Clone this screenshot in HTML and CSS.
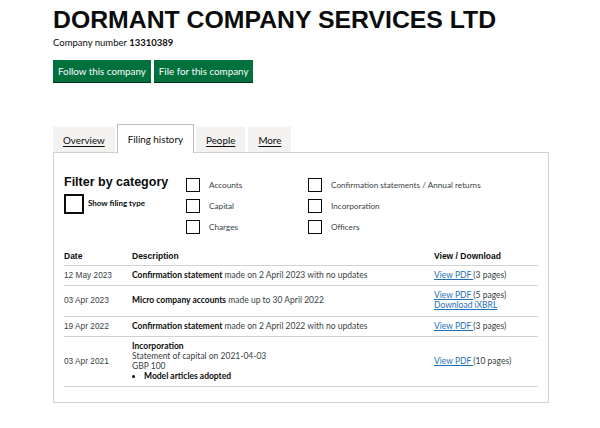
FILE: index.html
```html
<!DOCTYPE html>
<html lang="en">
<head>
<meta charset="utf-8">
<title>DORMANT COMPANY SERVICES LTD - Filing history</title>
<link rel="stylesheet" href="styles.css">
</head>
<body>
<div class="page">
  <h1 class="title">DORMANT COMPANY SERVICES LTD</h1>
  <p class="company-number">Company number <strong>13310389</strong></p>
  <div class="actions">
    <a class="btn" href="#">Follow this company</a>
    <a class="btn" href="#">File for this company</a>
  </div>

  <nav class="tabs">
    <a class="tab" href="#">Overview</a>
    <span class="tab tab-active">Filing history</span>
    <a class="tab" href="#">People</a>
    <a class="tab tab-more" href="#">More</a>
  </nav>

  <section class="panel">
    <div class="filters">
      <div class="filter-head">
        <h2 class="filter-title">Filter by category</h2>
        <label class="show-type"><span class="box-lg"></span><span class="show-type-text">Show filing type</span></label>
      </div>
      <div class="categories">
        <label class="cat"><span class="box"></span><span>Accounts</span></label>
        <label class="cat"><span class="box"></span><span>Capital</span></label>
        <label class="cat"><span class="box"></span><span>Charges</span></label>
        <label class="cat"><span class="box"></span><span>Confirmation statements / Annual returns</span></label>
        <label class="cat"><span class="box"></span><span>Incorporation</span></label>
        <label class="cat"><span class="box"></span><span>Officers</span></label>
      </div>
    </div>

    <table class="filings">
      <thead>
        <tr><th class="col-date">Date</th><th class="col-desc">Description</th><th class="col-view">View / Download</th></tr>
      </thead>
      <tbody>
        <tr>
          <td class="date">12 May 2023</td>
          <td class="desc"><strong>Confirmation statement</strong> made on 2 April 2023 with no updates</td>
          <td class="view"><a href="#">View PDF </a>(3 pages)</td>
        </tr>
        <tr>
          <td class="date">03 Apr 2023</td>
          <td class="desc"><strong>Micro company accounts</strong> made up to 30 April 2022</td>
          <td class="view"><a href="#">View PDF </a>(5 pages)<br><a href="#">Download iXBRL</a></td>
        </tr>
        <tr>
          <td class="date">19 Apr 2022</td>
          <td class="desc"><strong>Confirmation statement</strong> made on 2 April 2022 with no updates</td>
          <td class="view"><a href="#">View PDF </a>(3 pages)</td>
        </tr>
        <tr>
          <td class="date">03 Apr 2021</td>
          <td class="desc"><strong>Incorporation</strong><br>Statement of capital on 2021-04-03<br>GBP 100
            <ul class="bullets"><li>Model articles adopted</li></ul>
          </td>
          <td class="view"><a href="#">View PDF </a>(10 pages)</td>
        </tr>
      </tbody>
    </table>
  </section>
</div>
</body>
</html>
```

FILE: styles.css
```css
* { box-sizing: border-box; }

body {
  margin: 0;
  background: #ffffff;
  color: #0b0c0c;
  font-family: Lato, "Liberation Sans", Arial, sans-serif;
}

.page {
  padding: 6px 0 0 53px;
  width: 549px;
}

.title {
  margin: 0;
  font-family: "Liberation Sans", Arial, sans-serif;
  font-weight: 700;
  font-size: 24.8px;
  line-height: 28px;
  white-space: nowrap;
}

.company-number {
  margin: 3px 0 0;
  font-size: 9.5px;
  line-height: 12px;
  color: #0b0c0c;
}

.company-number strong { font-weight: 700; }

.actions {
  display: flex;
  gap: 3px;
  margin-top: 11px;
}

.btn {
  display: flex;
  align-items: center;
  height: 22px;
  padding: 0 5px;
  background: #00703c;
  color: #ffffff;
  text-decoration: none;
  font-size: 9.8px;
  box-shadow: 0 1px 0 #002d18;
}

.tabs {
  display: flex;
  align-items: flex-end;
  gap: 2px;
  margin-top: 42px;
  position: relative;
  z-index: 1;
}

.tab {
  display: flex;
  align-items: center;
  height: 25px;
  padding: 0 10px;
  background: #f3f2f1;
  color: #0b0c0c;
  font-size: 9.8px;
  text-decoration: underline;
  text-underline-offset: 2px;
}

.tab-more { margin-left: 1px; }

.tab-active {
  height: 29px;
  margin-bottom: -1px;
  padding: 0 10px 1px;
  background: #ffffff;
  border: 1px solid #b9bcbe;
  border-bottom: 0;
  text-decoration: none;
}

.panel {
  width: 496px;
  border: 1px solid #cfd1d2;
  padding: 22px 10px 15px 10px;
}

.filters {
  display: flex;
}

.filter-head {
  width: 122px;
  flex: none;
}

.filter-title {
  margin: 0;
  font-family: "Liberation Sans", Arial, sans-serif;
  font-weight: 700;
  font-size: 12.5px;
  line-height: 15px;
}

.show-type {
  display: flex;
  align-items: flex-start;
  gap: 4px;
  margin-top: 4px;
}

.box-lg {
  width: 20px;
  height: 20px;
  border: 2px solid #0b0c0c;
  flex: none;
}

.show-type-text {
  font-size: 8px;
  font-weight: 700;
  line-height: 10px;
  padding-top: 4px;
}

.categories {
  display: grid;
  grid-template-rows: repeat(3, 14px);
  grid-auto-flow: column;
  grid-template-columns: 122px auto;
  row-gap: 7px;
  margin-top: 3px;
}

.cat {
  display: flex;
  align-items: center;
  gap: 9px;
  font-size: 8.2px;
  color: #383f43;
}

.box {
  width: 14px;
  height: 14px;
  border: 1.5px solid #0b0c0c;
  flex: none;
}

.filings {
  width: 474px;
  margin-top: 13px;
  border-collapse: collapse;
  font-size: 8.5px;
  line-height: 10px;
}

.filings th {
  text-align: left;
  font-family: "Liberation Sans", Arial, sans-serif;
  font-weight: 700;
  font-size: 8.5px;
  padding: 4px 0 4px;
  border-bottom: 1px solid #cfd1d2;
}

.col-date { width: 68px; }
.col-desc { width: 302px; }
.col-view { width: 104px; }

.filings td {
  padding: 4px 0 5px;
  vertical-align: middle;
  border-bottom: 1px solid #cfd1d2;
  color: #383f43;
}

.filings tbody tr:nth-child(2) td { padding-bottom: 6px; }

.filings td strong { color: #0b0c0c; font-weight: 700; }

.filings .date {
  font-family: "Liberation Sans", Arial, sans-serif;
  font-size: 8.3px;
}

.view a {
  color: #1d70b8;
  text-decoration: underline;
}

.bullets {
  margin: 0;
  padding: 0 0 0 12px;
  font-weight: 700;
  color: #0b0c0c;
}
```
